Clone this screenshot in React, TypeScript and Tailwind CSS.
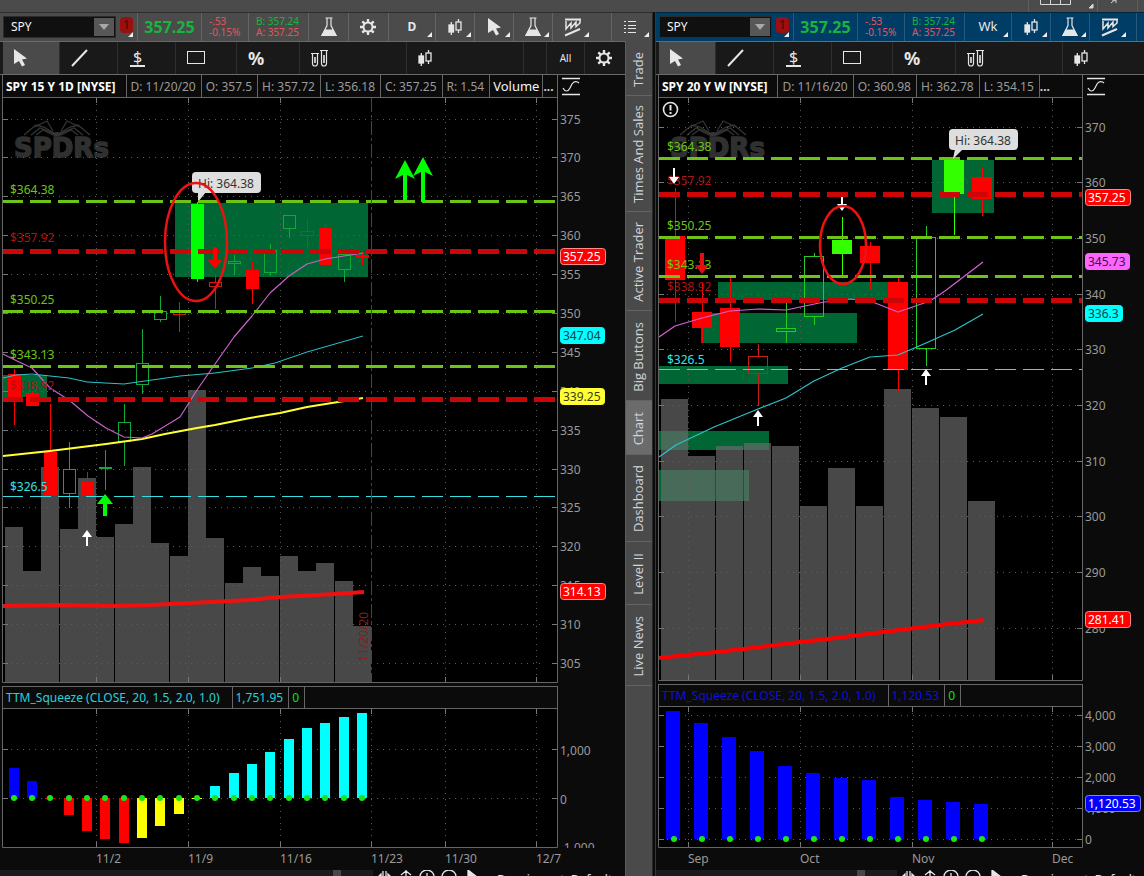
import type { ReactNode } from 'react';

type Candle = [x: number, top: number, bottom: number, high: number, low: number, kind: 'up' | 'down' | 'upHollow' | 'downHollow'];
type Level = { label: string; y: number; labelY: number; color: string; thick: number };
type Tag = { text: string; y: number; w: number; fill: string; edge: string; color: string };
type Bar = [x: number, top: number];

const GREEN = '#6cc417';
const RED = '#cc0606';
const CYAN = '#33e0e6';

/* ---------- data ---------- */

const dailyVolume: Bar[] = [
    [5, 527], [23, 571], [41, 467], [60, 529], [78, 478], [96, 537], [115, 524], [133, 467], [151, 543], [170, 556],
    [188, 390], [206, 538], [225, 583], [243, 567], [261, 576], [280, 556], [298, 571], [316, 563], [335, 581], [353, 626],
];

const dailyCandles: Candle[] = [
    [8, 374, 398, 369, 425, 'down'],
    [26, 393, 406, 391, 406, 'down'],
    [44, 452, 496, 404, 496, 'down'],
    [63, 469, 493, 442, 508, 'upHollow'],
    [81, 482, 496, 472, 527, 'down'],
    [99, 467, 468, 450, 490, 'upHollow'],
    [118, 422, 441, 404, 466, 'upHollow'],
    [136, 363, 384, 329, 394, 'upHollow'],
    [154, 311, 319, 296, 322, 'upHollow'],
    [173, 312, 314, 302, 332, 'downHollow'],
    [191, 204, 279, 202, 282, 'up'],
    [209, 282, 286, 274, 309, 'downHollow'],
    [228, 261, 263, 255, 275, 'upHollow'],
    [246, 270, 289, 262, 304, 'down'],
    [264, 250, 272, 244, 276, 'upHollow'],
    [283, 215, 228, 215, 238, 'upHollow'],
    [301, 231, 235, 219, 248, 'downHollow'],
    [319, 228, 265, 224, 265, 'down'],
    [338, 254, 269, 250, 282, 'upHollow'],
    [356, 255, 258, 252, 265, 'down'],
];

const dailyLevels: Level[] = [
    { label: '$364.38', y: 200, labelY: 194, color: GREEN, thick: 3 },
    { label: '$357.92', y: 249, labelY: 242, color: RED, thick: 5 },
    { label: '$350.25', y: 310, labelY: 304, color: GREEN, thick: 3 },
    { label: '$343.13', y: 365, labelY: 359, color: GREEN, thick: 3 },
    { label: '$338.92', y: 397, labelY: 390, color: RED, thick: 5 },
    { label: '$326.5', y: 496, labelY: 491, color: CYAN, thick: 1 },
];

const dailyPrices: [string, number][] = [
    ['375', 119], ['370', 157], ['365', 196], ['360', 235], ['355', 274], ['350', 313], ['345', 352], ['340', 391],
    ['335', 430], ['330', 469], ['325', 507], ['320', 546], ['315', 585], ['310', 624], ['305', 663],
];

const dailyTags: Tag[] = [
    { text: '357.25', y: 248, w: 45, fill: '#ff0000', edge: '#ff8a8a', color: '#ffffff' },
    { text: '347.04', y: 327, w: 44, fill: '#00ffff', edge: '#00ffff', color: '#123c3c' },
    { text: '339.25', y: 388, w: 44, fill: '#ffff33', edge: '#ffff33', color: '#3c3c10' },
    { text: '314.13', y: 583, w: 45, fill: '#ff0000', edge: '#ff8a8a', color: '#ffffff' },
];

const weeklyVolume: Bar[] = [
    [661, 399], [688, 456], [716, 446], [744, 443], [772, 446], [800, 506],
    [828, 468], [856, 506], [884, 389], [912, 408], [940, 417], [968, 501],
];

const weeklyCandles: Candle[] = [
    [665, 236, 280, 188, 322, 'down'],
    [692, 312, 328, 282, 343, 'down'],
    [720, 308, 347, 278, 362, 'down'],
    [748, 356, 373, 344, 406, 'downHollow'],
    [776, 328, 331, 303, 343, 'upHollow'],
    [804, 256, 316, 253, 325, 'upHollow'],
    [832, 240, 254, 217, 276, 'up'],
    [860, 246, 263, 242, 290, 'down'],
    [888, 282, 370, 278, 391, 'down'],
    [916, 237, 348, 226, 366, 'upHollow'],
    [944, 160, 194, 160, 235, 'up'],
    [972, 177, 199, 168, 216, 'down'],
];

const weeklyLevels: Level[] = [
    { label: '$364.38', y: 157, labelY: 151, color: GREEN, thick: 3 },
    { label: '$357.92', y: 192, labelY: 185, color: RED, thick: 5 },
    { label: '$350.25', y: 236, labelY: 230, color: GREEN, thick: 3 },
    { label: '$343.13', y: 275, labelY: 269, color: GREEN, thick: 3 },
    { label: '$338.92', y: 298, labelY: 291, color: RED, thick: 5 },
    { label: '$326.5', y: 369, labelY: 364, color: CYAN, thick: 1 },
];

const weeklyPrices: [string, number][] = [
    ['370', 127], ['360', 182], ['350', 238], ['340', 294], ['330', 349],
    ['320', 405], ['310', 461], ['300', 516], ['290', 572], ['280', 628],
];

const weeklyTags: Tag[] = [
    { text: '357.25', y: 189, w: 45, fill: '#ff0000', edge: '#ff8a8a', color: '#ffffff' },
    { text: '345.73', y: 253, w: 44, fill: '#ff66ff', edge: '#ff66ff', color: '#3c103c' },
    { text: '336.3', y: 305, w: 37, fill: '#00ffff', edge: '#00ffff', color: '#123c3c' },
    { text: '281.41', y: 611, w: 45, fill: '#ff0000', edge: '#ff8a8a', color: '#ffffff' },
];

const dailySqueeze: [number, number, number, string][] = [
    [14, 768, 798, '#0000ff'], [32, 781, 798, '#0000ff'], [50, 798, 799, '#ff0000'], [69, 798, 815, '#ff0000'],
    [87, 798, 831, '#ff0000'], [105, 798, 839, '#ff0000'], [124, 798, 843, '#ff0000'], [142, 798, 838, '#ffff00'],
    [160, 798, 826, '#ffff00'], [179, 798, 814, '#ffff00'], [197, 798, 799, '#ffff00'], [215, 786, 798, '#00ffff'],
    [234, 773, 798, '#00ffff'], [252, 764, 798, '#00ffff'], [270, 752, 798, '#00ffff'], [289, 739, 798, '#00ffff'],
    [307, 728, 798, '#00ffff'], [325, 723, 798, '#00ffff'], [344, 717, 798, '#00ffff'], [362, 713, 798, '#00ffff'],
];

const weeklySqueeze = [711, 723, 737, 751, 766, 773, 778, 780, 797, 800, 802, 804];

const dailyDates: [string, number][] = [['11/2', 96], ['11/9', 188], ['11/16', 280], ['11/23', 371], ['11/30', 445], ['12/7', 536]];
const weeklyDates: [string, number][] = [['Sep', 688], ['Oct', 800], ['Nov', 912], ['Dec', 1052]];

/* ---------- icons ---------- */

function CursorIcon() {
    return (
        <svg width="13" height="18" viewBox="0 0 13 18" fill="#e6e6e6">
            <path d="M0 0 L13 9.5 L8 10.5 L11 16 L8 17.5 L5 12 L0 15 Z" />
        </svg>
    );
}

function FlaskIcon() {
    return (
        <svg width="16" height="20" viewBox="0 0 16 20" fill="none" stroke="#e6e6e6" strokeWidth="1.2">
            <path d="M4.5 1h7M6 1.5v7L1 18.5h14l-5-10v-7" />
            <path d="M4 13h8l3 5.5H1z" fill="#e6e6e6" />
        </svg>
    );
}

function GearIcon() {
    return (
        <svg className="mr-0.5" width="18" height="18" viewBox="0 0 18 18" fill="none" stroke="#e6e6e6">
            <circle cx="9" cy="9" r="4.5" strokeWidth="2" />
            <path
                d="M9 1v3M9 14v3M1 9h3M14 9h3M3.300 3.300l2.100 2.100M12.600 12.600l2.100 2.100M14.700 3.300l-2.100 2.100M5.400 12.600l-2.100 2.100"
                strokeWidth="2.4"
            />
        </svg>
    );
}

function CandlesIcon() {
    return (
        <svg width="14" height="18" viewBox="0 0 14 18" fill="none" stroke="#e6e6e6" strokeWidth="1.300">
            <rect x="1" y="7" width="4.500" height="7" fill="#e6e6e6" />
            <path d="M3.300 4v13M10.500 1v3M10.500 12v3" />
            <rect x="8" y="4" width="5" height="8" />
        </svg>
    );
}

function PatternIcon() {
    return (
        <svg width="18" height="19" viewBox="0 0 18 19" fill="none" stroke="#e6e6e6">
            <path d="M1 1.500h16" strokeWidth="2" />
            <path d="M2 3v8l5-6v5l5-6v4.500L16 5V2" strokeWidth="1.500" />
            <path d="M1 17.500L16 11" strokeWidth="2" />
        </svg>
    );
}

function ListIcon() {
    return (
        <svg className="mr-1" width="12" height="12" viewBox="0 0 12 12" fill="#e6e6e6" shapeRendering="crispEdges">
            {[0, 4, 7, 11].map((y) => (
                <g key={y}>
                    <rect x="0" y={y} width="2" height="1" />
                    <rect x="4" y={y} width="8" height="1" />
                </g>
            ))}
        </svg>
    );
}

function LineIcon() {
    return (
        <svg width="18" height="18" viewBox="0 0 18 18" stroke="#e6e6e6" strokeWidth="2">
            <path d="M1 17L16 1" />
        </svg>
    );
}

function RectIcon() {
    return (
        <svg width="18" height="14" viewBox="0 0 18 14" fill="none" stroke="#e6e6e6">
            <rect x="0.500" y="0.500" width="17" height="12" />
        </svg>
    );
}

function TubesIcon() {
    return (
        <svg width="17" height="18" viewBox="0 0 17 18" fill="none" stroke="#e6e6e6" strokeWidth="1.200">
            <path d="M0 4.500h8M1.500 5v9.500a2.500 2.500 0 0 0 5 0V5M9 1.500h8M10.500 2v12.500a2.500 2.500 0 0 0 5 0V2" />
            <path d="M4 8v6M13 6v8" strokeWidth="1.600" />
        </svg>
    );
}

function CurveIcon() {
    return (
        <svg width="18" height="19" viewBox="0 0 18 19" fill="none" stroke="#e6e6e6">
            <path d="M0 1.500h18M0 17.500h18" strokeWidth="1.600" />
            <path d="M1 11c2 4 5 4 7 0l2-4c2-3 5-3 7-1" strokeWidth="1.200" />
        </svg>
    );
}

function AlertIcon() {
    return (
        <svg x="662" y="101" width="17" height="17" viewBox="0 0 17 17" fill="none" stroke="#e6e6e6">
            <circle cx="8.500" cy="8.500" r="7" strokeWidth="1.600" />
            <path d="M8.500 4v5.500M8.500 11v2" strokeWidth="2" />
        </svg>
    );
}

/* ---------- toolbars ---------- */

function Cell({ width, corner, line = true, children }: { width: string; corner?: boolean; line?: boolean; children?: ReactNode }) {
    return (
        <button type="button" className={`relative flex h-full shrink-0 items-center justify-center ${width} ${line ? 'border-r border-white/15' : ''}`}>
            {children}
            {corner && (
                <svg className="absolute right-[3px] bottom-1" width="5" height="5" viewBox="0 0 5 5" fill="#eeeeee">
                    <path d="M5 0v5H0z" />
                </svg>
            )}
        </button>
    );
}

function SymbolHeader({ tone, id, children }: { tone: string; id: string; children: ReactNode }) {
    return (
        <div className={`flex h-[29px] items-center overflow-hidden border-t border-black/40 pl-[3px] ${tone}`}>
            <div className="flex h-[22px] w-[113px] shrink-0 border border-[#2c2c2c] bg-[#101010] p-px">
                <input id={id} aria-label="Symbol" defaultValue="SPY" className="w-[91px] min-w-0 bg-transparent pl-1.5 text-xs text-gray-100 outline-none" />
                <button type="button" aria-label="Open symbol list" className="flex w-5 shrink-0 items-center justify-center bg-[#575757]">
                    <svg width="10" height="6" viewBox="0 0 10 6" fill="#a8a8a8">
                        <path d="M0 0h10L5 6z" />
                    </svg>
                </button>
            </div>
            <button type="button" className="relative flex h-full w-[22px] shrink-0 items-center justify-center border-r border-white/15">
                <span className="mb-1 rounded-sm bg-[#9c0f0f] px-[3px] text-xs leading-4 text-[#3c0505]">1</span>
                <svg className="absolute right-1 bottom-1" width="5" height="5" viewBox="0 0 5 5" fill="#eeeeee">
                    <path d="M5 0v5H0z" />
                </svg>
            </button>
            <div className="flex h-full w-16 shrink-0 items-center justify-center border-r border-white/15 text-base font-bold text-[#17b53c]">357.25</div>
            <div className="h-full w-[47px] shrink-0 border-r border-white/15 pt-[3px] pl-[7px] text-[10px] leading-[11px] text-[#e0565e]">
                <div>-.53</div>
                <div>-0.15%</div>
            </div>
            <div className="h-full w-[60px] shrink-0 border-r border-white/15 pt-[3px] pl-[7px] text-[10px] leading-[11px]">
                <div className="text-[#17b53c]">B: 357.24</div>
                <div className="text-[#e0565e]">A: 357.25</div>
            </div>
            {children}
        </div>
    );
}

function Tool({ width, active, children }: { width: string; active?: boolean; children?: ReactNode }) {
    return (
        <button type="button" className={`flex h-full shrink-0 items-center border-r border-[#2e2e2e] pl-[11px] ${width} ${active ? 'bg-[#4a4a4a]' : ''}`}>
            {children}
        </button>
    );
}

function DrawingTools({ children }: { children?: ReactNode }) {
    return (
        <div className="flex h-[34px] overflow-hidden border-t border-b border-[#6a6a6a] bg-[#191919] pl-[3px]">
            <Tool width="w-[57px]" active><CursorIcon /></Tool>
            <Tool width="w-[58px]"><LineIcon /></Tool>
            <Tool width="w-[58px]">
                <span className="ml-px w-[15px] border-b-2 border-[#e6e6e6] text-center text-base leading-4 text-[#e6e6e6]">$</span>
            </Tool>
            <Tool width="w-[61px]"><RectIcon /></Tool>
            <Tool width="w-[63px]"><span className="text-lg leading-5 font-bold text-[#e6e6e6]">%</span></Tool>
            <Tool width="w-[107px]"><TubesIcon /></Tool>
            {children}
        </div>
    );
}

function InfoRow({ title, values, axis, children }: { title: string; values: string[]; axis: string; children?: ReactNode }) {
    return (
        <div className="flex h-[23px] bg-[#0b0b0b] pl-0.5">
            <div className="flex min-w-0 flex-1 overflow-hidden border-r border-b border-l border-[#666] text-xs leading-[23px] whitespace-nowrap text-[#9a9a9a]">
                <span className="border-r border-[#666] pr-2.5 pl-[3px] font-bold text-white">{title}</span>
                {values.map((value) => (
                    <span key={value} className="border-r border-[#666] pr-[5px] pl-1">{value}</span>
                ))}
                {children}
                <span className="font-bold text-gray-300">...</span>
            </div>
            <div className={`flex shrink-0 items-center pl-1 ${axis}`}><CurveIcon /></div>
        </div>
    );
}

function StudyRow({ color, value, axis }: { color: string; value: string; axis: string }) {
    return (
        <div className="flex h-[23px] bg-[#0b0b0b] pl-0.5">
            <div className={`flex min-w-0 flex-1 overflow-hidden border border-[#666] text-xs leading-[21px] whitespace-nowrap ${color}`}>
                <span className="border-r border-[#666] pr-3 pl-[3px]">TTM_Squeeze (CLOSE, 20, 1.5, 2.0, 1.0)</span>
                <span className="border-r border-[#666] pr-[5px] pl-[3px]">{value}</span>
                <span className="border-r border-[#666] pr-[5px] pl-[3px] text-[#00e600]">0</span>
            </div>
            <div className={`shrink-0 ${axis}`} />
        </div>
    );
}

function ChartFooter({ labelWidth }: { labelWidth: string }) {
    return (
        <div className="flex h-6 min-h-0 shrink-0 overflow-hidden bg-[#0b0b0b]">
            <div className="flex min-w-0 flex-1 bg-[#1b1b1b] pr-8">
                <div className="ml-auto h-3 w-2 bg-[#474747]" />
            </div>
            <svg width="116" height="18" viewBox="0 0 116 18" fill="none" stroke="#e6e6e6" strokeWidth="1.300">
                <path d="M5 7l3-3v6zM18 7l-3-3v6zM10 1v8M13 1v8" />
                <path d="M33 0v12M28 5l5-4 5 4" />
                <circle cx="54" cy="7" r="7" />
                <path d="M54 3v8M50 7h8" />
                <circle cx="76" cy="7" r="7" />
                <path d="M72 7h8" />
                <path d="M95 0l9 7-9 7z" fill="#e6e6e6" />
            </svg>
            <span className={`shrink-0 pt-0.5 pl-2 text-xs leading-4 whitespace-nowrap text-gray-200 ${labelWidth}`}>Drawing set: Default</span>
        </div>
    );
}

/* ---------- chart parts ---------- */

function Grid({ x1, x2, end, top, bottom, rows, cols }: { x1: number; x2: number; end: number; top: number; bottom: number; rows: number[]; cols: number[] }) {
    return (
        <g shapeRendering="crispEdges">
            <g fill="none" stroke="#5c5c5c" strokeWidth="1">
                {rows.map((y) => (
                    <path key={y} d={`M${x1 + 2} ${y + 0.5}H${end}`} strokeDasharray="1 5" />
                ))}
                {cols.map((x) => (
                    <path key={x} d={`M${x + 0.5} ${top}V${bottom}`} strokeDasharray="1 5" />
                ))}
            </g>
            <g fill="none" stroke="#777777">
                {rows.map((y) => (
                    <path key={y} d={`M${x1} ${y + 0.5}h5M${x2 - 5} ${y + 0.5}h5`} />
                ))}
                {cols.map((x) => (
                    <path key={x} d={`M${x + 0.5} ${top}v5M${x + 0.5} ${bottom - 5}v5`} />
                ))}
            </g>
        </g>
    );
}

function Volume({ bars, width, bottom }: { bars: Bar[]; width: number; bottom: number }) {
    return (
        <g fill="#6d6d6d" fillOpacity="0.66" shapeRendering="crispEdges">
            {bars.map(([x, top]) => (
                <rect key={x} x={x} y={top} width={width} height={bottom - top} />
            ))}
        </g>
    );
}

function Candles({ data, width, up, upLine }: { data: Candle[]; width: number; up: string; upLine: string }) {
    return (
        <g shapeRendering="crispEdges">
            {data.map(([x, top, bottom, high, low, kind]) => {
                const hollow = kind === 'upHollow' || kind === 'downHollow';
                const rising = kind === 'up' || kind === 'upHollow';
                const color = rising ? (hollow ? upLine : up) : hollow ? '#c81e14' : '#ff0000';
                const mid = x + Math.floor(width / 2);
                return (
                    <g key={x} fill={color}>
                        <rect x={mid} y={high} width="1" height={Math.max(top - high, 0)} />
                        <rect x={mid} y={bottom} width="1" height={Math.max(low - bottom, 0)} />
                        {hollow ? (
                            <rect x={x + 0.5} y={top + 0.5} width={width - 1} height={bottom - top} fill="none" stroke={color} />
                        ) : (
                            <rect x={x} y={top} width={width} height={bottom - top} />
                        )}
                    </g>
                );
            })}
        </g>
    );
}

function Levels({ data, x1, x2 }: { data: Level[]; x1: number; x2: number }) {
    return (
        <g>
            {data.map((level) => (
                <g key={level.label}>
                    <path
                        d={`M${x1} ${level.y + level.thick / 2}H${x2}`}
                        stroke={level.color}
                        strokeWidth={level.thick}
                        strokeDasharray="21 7"
                    />
                    <text x={x1 + 8} y={level.labelY} fill={level.color === RED ? '#a81414' : level.color}>{level.label}</text>
                </g>
            ))}
        </g>
    );
}

function PriceAxis({ x, prices, tags }: { x: number; prices: [string, number][]; tags: Tag[] }) {
    return (
        <g>
            {prices.map(([text, y]) => (
                <text key={text} x={x} y={y + 5} fill="#9a9a9a">{text}</text>
            ))}
            {tags.map((tag) => (
                <g key={tag.text}>
                    <rect x={x + 0.5} y={tag.y + 0.5} width={tag.w} height="16" rx="3" fill={tag.fill} stroke={tag.edge} />
                    <text x={x + 3} y={tag.y + 13} fill={tag.color}>{tag.text}</text>
                </g>
            ))}
        </g>
    );
}

function Callout({ x, y, tipX, tipY }: { x: number; y: number; tipX: number; tipY: number }) {
    return (
        <g>
            <path d={`M${x + 6} ${y + 20}L${tipX} ${tipY}L${x + 14} ${y + 20}z`} fill="#dedede" />
            <rect x={x} y={y} width="69" height="21" rx="4" fill="#dedede" />
            <text x={x + 6} y={y + 16} fill="#333333">Hi: 364.38</text>
        </g>
    );
}

function Arrow({ x, y, down, color = '#ffffff', size = 5, length = 16, stem = 2 }: { x: number; y: number; down?: boolean; color?: string; size?: number; length?: number; stem?: number }) {
    const s = down ? -1 : 1;
    return (
        <g fill={color}>
            <path d={`M${x} ${y}l${size} ${s * (size + 2)}h${-2 * size}z`} />
            <path d={`M${x} ${y + s * 4}V${y + s * length}`} stroke={color} strokeWidth={stem} />
        </g>
    );
}

function SpiderLogo({ x, y }: { x: number; y: number }) {
    return (
        <g transform={`translate(${x} ${y})`}>
            <g fill="none" stroke="#343434" strokeWidth="1.300">
                <path d="M10 14L22 4l8 2 10 6M17 14L26 7l6 2 8 4M22 14l7-5 10 5M20 6L33 0l6 10" />
                <path d="M76 14L64 4l-8 2-10 6M69 14L60 7l-6 2-8 4M64 14l-7-5-10 5M66 6L53 0l-6 10" />
            </g>
            <ellipse cx="43" cy="13" rx="5" ry="2" fill="#343434" />
            <text x="0" y="36" fill="#303030" stroke="#303030" strokeWidth="1.500" className="font-['DejaVu_Sans'] text-[26px] font-bold">SPDRs</text>
        </g>
    );
}

/* ---------- charts ---------- */

function DailyPriceChart() {
    const cols = dailyDates.map(([, x]) => x);
    return (
        <svg className="block h-auto w-full text-xs" viewBox="0 98 625 588" role="img" aria-label="SPY daily price">
            <rect x="0" y="98" width="625" height="588" fill="#0b0b0b" />
            <rect x="3" y="98" width="554" height="584" fill="#000000" />
            <SpiderLogo x={14} y={121} />
            <rect x="175" y="203" width="193" height="74" fill="#006633" />
            <rect x="3" y="375" width="44" height="22" fill="#006633" />
            <Volume bars={dailyVolume} width={18} bottom={682} />
            <Grid x1={3} x2={557} end={543} top={98} bottom={682} rows={dailyPrices.map(([, y]) => y)} cols={cols.filter((x) => x !== 371)} />
            <Candles data={dailyCandles} width={13} up="#00ff00" upLine="#12a838" />
            <g fill="none" strokeLinejoin="round">
                <path d="M3 378L16 375 32 374 50 376 69 378 87 382 124 384 145 381 180 376 215 373 252 368 275 363 307 352 363 336" stroke="#2cc4cc" />
                <path d="M3 456L50 451 106 444 142 439 165 434 197 428 215 425 250 418 280 413 307 407 363 398" stroke="#ffff33" strokeWidth="2" />
                <path d="M3 354L17 361 32 368 50 388 69 400 88 416 106 428 124 437 142 438 152 434 180 417 197 390 215 364 234 337 252 316 270 293 289 276 307 264 325 259 344 256 363 253" stroke="#c862c8" strokeWidth="1.200" />
                <path d="M3 606L60 605 115 606 150 605 190 603 250 600 280 597 335 594 364 592" stroke="#f01010" strokeWidth="4" />
            </g>
            <Callout x={192} y={172} tipX={198} tipY={202} />
            <Levels data={dailyLevels} x1={2} x2={555} />
            <path d="M371.500 98V682" stroke="#b01818" strokeDasharray="14 3 3 3" />
            <text transform="translate(368 662) rotate(-90)" fill="#8c1c1c">11/20/20</text>
            <Arrow x={215} y={269} down color="#ff0000" size={7} length={22} stem={4} />
            <Arrow x={87} y={530} />
            <Arrow x={105} y={494} color="#00ff00" size={8} length={22} stem={4} />
            <g fill="#00ff00">
                <path d="M405 160l10 19-8-4v25h-4v-25l-8 4z" />
                <path d="M423 157l10 19-8-4v30h-4v-30l-8 4z" />
            </g>
            <ellipse cx="196" cy="242" rx="31" ry="59" fill="none" stroke="#ee1111" strokeWidth="2.500" />
            <path d="M2.500 98V682.500H557.500V98" fill="none" stroke="#666666" />
            <PriceAxis x={560} prices={dailyPrices} tags={dailyTags} />
        </svg>
    );
}

function WeeklyPriceChart() {
    return (
        <svg className="block h-auto w-full text-xs" viewBox="656 98 488 586" role="img" aria-label="SPY weekly price">
            <rect x="656" y="98" width="488" height="586" fill="#0b0b0b" />
            <rect x="659" y="98" width="423" height="582" fill="#000000" />
            <SpiderLogo x={670} y={121} />
            <AlertIcon />
            <g fill="#006633">
                <rect x="718" y="282" width="180" height="18" />
                <rect x="701" y="313" width="156" height="30" />
                <rect x="659" y="366" width="129" height="18" />
                <rect x="659" y="431" width="110" height="19" />
                <rect x="659" y="470" width="90" height="31" />
                <rect x="932" y="160" width="62" height="53" />
            </g>
            <Volume bars={weeklyVolume} width={27} bottom={680} />
            <Grid x1={659} x2={1082} end={1080} top={98} bottom={680} rows={weeklyPrices.map(([, y]) => y)} cols={weeklyDates.map(([, x]) => x)} />
            <Candles data={weeklyCandles} width={20} up="#33ff00" upLine="#22cc22" />
            <g fill="none" strokeLinejoin="round">
                <path d="M659 457L676 445 714 427 758 409 786 398 814 381 842 368 870 357 898 355 926 343 955 330 983 314" stroke="#2cc4cc" strokeWidth="1.200" />
                <path d="M659 337L675 326 702 318 730 311 758 309 786 310 824 302 850 299 870 301 898 312 930 301 945 291 983 262" stroke="#d860d8" strokeWidth="1.200" />
                <path d="M659 658L716 652 744 649 800 642 828 639 883 632 940 625 984 620" stroke="#ff0000" strokeWidth="4" />
            </g>
            <Levels data={weeklyLevels} x1={659} x2={1082} />
            <Callout x={949} y={129} tipX={953} tipY={159} />
            <Arrow x={674} y={184} down />
            <Arrow x={842} y={211} down length={14} />
            <Arrow x={702} y={274} down color="#e01010" size={7} length={21} stem={4} />
            <Arrow x={758} y={410} />
            <Arrow x={926} y={369} />
            <ellipse cx="843" cy="245" rx="23" ry="39" fill="none" stroke="#ee1111" strokeWidth="2.500" />
            <path d="M658.500 98V680.500H1082.500V98" fill="none" stroke="#666666" />
            <PriceAxis x={1085} prices={weeklyPrices} tags={weeklyTags} />
        </svg>
    );
}

function DailySqueeze() {
    return (
        <svg className="block h-auto w-full text-xs" viewBox="0 709 625 161" role="img" aria-label="Daily TTM squeeze">
            <rect x="0" y="709" width="625" height="161" fill="#0b0b0b" />
            <rect x="3" y="709" width="554" height="138" fill="#000000" />
            <Grid x1={3} x2={557} end={543} top={709} bottom={847} rows={[749, 798]} cols={dailyDates.map(([, x]) => x)} />
            {dailySqueeze.map(([x, top, bottom, color]) => (
                <g key={x}>
                    <rect x={x - 5} y={top} width="10" height={bottom - top} fill={color} />
                    <circle cx={x} cy="798" r="3" fill="#19e619" />
                </g>
            ))}
            <path d="M2.500 709V847.500H557.500V709" fill="none" stroke="#666666" />
            <g fill="#9a9a9a">
                <text x="560" y="755">1,000</text>
                <text x="560" y="804">0</text>
                <svg x="560" y="838" width="60" height="10"><text x="0" y="14">-1,000</text></svg>
                {dailyDates.map(([text, x]) => (
                    <text key={text} x={x} y="863">{text}</text>
                ))}
            </g>
        </svg>
    );
}

function WeeklySqueeze() {
    const rows: [string, number][] = [['4,000', 715], ['3,000', 746], ['2,000', 777], ['1,000', 808], ['0', 839]];
    return (
        <svg className="block h-auto w-full text-xs" viewBox="656 707 488 163" role="img" aria-label="Weekly TTM squeeze">
            <rect x="656" y="707" width="488" height="163" fill="#0b0b0b" />
            <rect x="659" y="707" width="423" height="140" fill="#000000" />
            <Grid x1={659} x2={1082} end={1080} top={707} bottom={847} rows={rows.map(([, y]) => y)} cols={weeklyDates.map(([, x]) => x)} />
            {weeklySqueeze.map((top, i) => (
                <g key={top}>
                    <rect x={666 + i * 28} y={top} width="14" height={839 - top} fill="#0000ff" />
                    <circle cx={674 + i * 28} cy="839" r="3" fill="#19e619" />
                </g>
            ))}
            <path d="M658.500 707V847.500H1082.500V707" fill="none" stroke="#666666" />
            <PriceAxis x={1085} prices={rows} tags={[{ text: '1,120.53', y: 795, w: 55, fill: '#0000ff', edge: '#8080ff', color: '#ffffff' }]} />
            <g fill="#9a9a9a">
                {weeklyDates.map(([text, x]) => (
                    <text key={text} x={x} y="863">{text}</text>
                ))}
            </g>
        </svg>
    );
}

/* ---------- page ---------- */

const tabs = [
    { name: 'Trade', height: 'h-[55px]' },
    { name: 'Times And Sales', height: 'h-[116px]' },
    { name: 'Active Trader', height: 'h-[99px]' },
    { name: 'Big Buttons', height: 'h-[90px]' },
    { name: 'Chart', height: 'h-[54px]' },
    { name: 'Dashboard', height: 'h-[87px]' },
    { name: 'Level II', height: 'h-[63px]' },
    { name: 'Live News', height: 'h-[81px]' },
];

function GadgetTabs() {
    return (
        <nav className="w-[27px] shrink-0 border-l border-[#5c5c5c] bg-[#4a4a4a]">
            {tabs.map((tab) => (
                <button
                    key={tab.name}
                    type="button"
                    className={`flex w-full items-center justify-center border-b border-[#636363] pt-0.5 font-['Open_Sans',sans-serif] text-[13px] text-gray-300 ${tab.height} ${tab.name === 'Chart' ? 'bg-[#6b6b6b]' : ''}`}
                >
                    <span className="rotate-180 whitespace-nowrap [writing-mode:vertical-rl]">{tab.name}</span>
                </button>
            ))}
        </nav>
    );
}

export default function App() {
    return (
        <div className="flex h-screen flex-col overflow-hidden bg-[#0b0b0b] font-['Noto_Sans',sans-serif]">
            <div className="flex h-3 shrink-0 justify-end bg-[#4b4b4b]">
                <svg width="116" height="12" viewBox="0 0 116 12" fill="none" stroke="#d8d8d8">
                    <path d="M0.500 0v12M69.500 0v12M109.500 0v12" stroke="#5e5e5e" />
                    <path d="M12.500 0v4.500h30V0M22.500 0v4M32.500 0v4" />
                    <path d="M65 4v4h-4zM83 3l5-4" fill="#d8d8d8" />
                    <path d="M84 0h4v3" />
                </svg>
            </div>
            <div className="grid min-h-0 flex-1 grid-cols-[minmax(0,652fr)_4px_minmax(0,488fr)]">
                <section className="flex min-h-0 flex-col">
                    <SymbolHeader tone="bg-[#4b4b4b]" id="daily-symbol">
                        <Cell width="w-10"><FlaskIcon /></Cell>
                        <Cell width="w-10"><GearIcon /></Cell>
                        <Cell width="w-[47px]" corner><span className="text-xs font-bold text-gray-200">D</span></Cell>
                        <Cell width="w-[39px]" corner><CandlesIcon /></Cell>
                        <Cell width="w-[39px]" corner><CursorIcon /></Cell>
                        <Cell width="w-[39px]" corner><FlaskIcon /></Cell>
                        <Cell width="w-[39px]" corner line={false}><PatternIcon /></Cell>
                        <div className="h-full flex-1 border-r border-white/15" />
                        <Cell width="w-10" corner line={false}><ListIcon /></Cell>
                    </SymbolHeader>
                    <div className="flex min-h-0 flex-1">
                        <div className="min-w-0 flex-1">
                            <DrawingTools>
                                <Tool width="w-[117px]"><CandlesIcon /></Tool>
                                <div className="flex-1 border-r border-[#2e2e2e]" />
                                <button type="button" className="w-[38px] border-r border-[#2e2e2e] text-[10px] text-gray-200">All</button>
                                <button type="button" aria-label="Drawing settings" className="flex w-10 items-center justify-center"><GearIcon /></button>
                            </DrawingTools>
                            <InfoRow title="SPY 15 Y 1D [NYSE]" values={['D: 11/20/20', 'O: 357.5', 'H: 357.72', 'L: 356.18', 'C: 357.25', 'R: 1.54']} axis="w-[67px]">
                                <span className="border-r border-[#666] px-[3px] text-[13px] text-gray-100">Volume</span>
                            </InfoRow>
                            <DailyPriceChart />
                            <StudyRow color="text-[#22d3dc]" value="1,751.95" axis="w-[67px]" />
                            <DailySqueeze />
                            <ChartFooter labelWidth="w-[136px]" />
                        </div>
                        <GadgetTabs />
                    </div>
                </section>
                <div className="border-r border-l border-r-[#0d4468] border-l-[#2a2a2a] bg-[#0b0b0b]" />
                <section className="min-h-0 min-w-0">
                    <SymbolHeader tone="bg-[#003d66]" id="weekly-symbol">
                        <Cell width="w-[47px]" corner><span className="text-[13px] text-gray-200">Wk</span></Cell>
                        <Cell width="w-[39px]" corner><CandlesIcon /></Cell>
                        <Cell width="w-[39px]" corner><FlaskIcon /></Cell>
                        <Cell width="w-[39px]" corner line={false}><PatternIcon /></Cell>
                        <div className="h-full w-2 border-r border-white/15" />
                    </SymbolHeader>
                    <DrawingTools>
                        <Tool width="w-[107px]"><CandlesIcon /></Tool>
                    </DrawingTools>
                    <InfoRow title="SPY 20 Y W [NYSE]" values={['D: 11/16/20', 'O: 360.98', 'H: 362.78', 'L: 354.15']} axis="w-[61px]" />
                    <WeeklyPriceChart />
                    <StudyRow color="text-[#1010d8]" value="1,120.53" axis="w-[61px]" />
                    <WeeklySqueeze />
                    <ChartFooter labelWidth="w-[131px]" />
                </section>
            </div>
        </div>
    );
}
